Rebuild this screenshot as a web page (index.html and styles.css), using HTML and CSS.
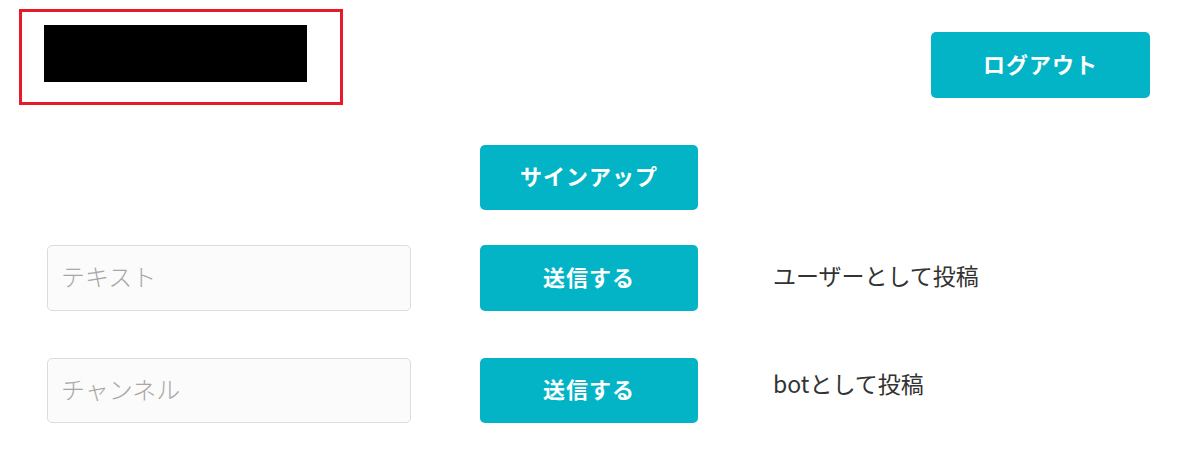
FILE: index.html
```html
<!DOCTYPE html>
<html lang="ja">
<head>
<meta charset="utf-8">
<link rel="stylesheet" href="styles.css">
</head>
<body>
<header class="header">
  <div class="logo-box"><div class="logo-fill"></div></div>
  <button class="btn btn-logout">ログアウト</button>
</header>
<main class="grid">
  <div class="row row-signup">
    <div class="cell-input"></div>
    <button class="btn">サインアップ</button>
    <div></div>
  </div>
  <div class="row row-1">
    <input class="field" type="text" placeholder="テキスト">
    <button class="btn">送信する</button>
    <span class="label label-1">ユーザーとして投稿</span>
  </div>
  <div class="row row-2">
    <input class="field" type="text" placeholder="チャンネル">
    <button class="btn">送信する</button>
    <span class="label label-2">botとして投稿</span>
  </div>
</main>
</body>
</html>
```

FILE: styles.css
```css
* { box-sizing: border-box; }
html, body { margin: 0; padding: 0; background: #fff; }
body {
  width: 1200px;
  height: 455px;
  overflow: hidden;
  font-family: "Noto Sans CJK JP", "Noto Sans", sans-serif;
  color: #333;
}
.header {
  display: flex;
  justify-content: space-between;
  align-items: flex-start;
  padding: 9px 50px 0 19px;
}
.logo-box {
  width: 324px;
  height: 96px;
  border: 3px solid #e81a2a;
  padding: 13px 0 0 22px;
}
.logo-fill {
  width: 263px;
  height: 57px;
  background: #000;
}
.btn {
  width: 218px;
  height: 65px;
  border: none;
  border-radius: 5px;
  background: #03b4c6;
  color: #fff;
  font-family: "Noto Sans CJK JP", "Noto Sans", sans-serif;
  font-weight: 700;
  font-size: 22px;
  letter-spacing: 1px;
  padding: 0 0 5px;
  cursor: pointer;
}
.btn-logout {
  width: 219px;
  height: 66px;
  margin-top: 23px;
}
.grid {
  padding-left: 47px;
}
.row {
  display: grid;
  grid-template-columns: 364px 218px 1fr;
  column-gap: 69px;
  align-items: center;
}
.row > :nth-child(3) { margin-left: 6px; }
.row-signup { margin-top: 40px; }
.row-1 { margin-top: 35px; }
.row-2 { margin-top: 47px; }
.row-1 .btn { height: 66px; }
.field {
  width: 364px;
  height: 66px;
  border: 1px solid #dcdcdc;
  border-radius: 5px;
  background: #fbfbfb;
  padding: 0 13px 5px;
  font-family: "Noto Sans CJK JP", "Noto Sans", sans-serif;
  font-weight: 300;
  font-size: 24px;
  color: #333;
  outline: none;
}
.row-2 .field { height: 65px; }
.field::placeholder { color: #a9a7a5; }
.label {
  font-size: 23px;
  color: #333;
  font-weight: 400;
  position: relative;
}
.label-1 { top: -3px; }
.label-2 { top: -8px; }
```
